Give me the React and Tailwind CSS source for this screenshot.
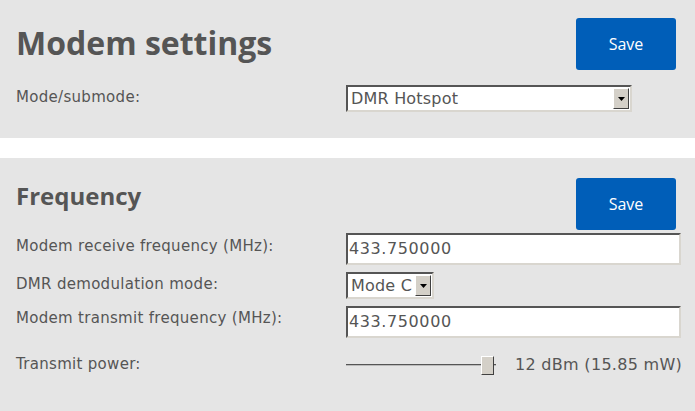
import { useState } from 'react';

const headFont = { fontFamily: '"Open Sans", "DejaVu Sans", sans-serif' };
const bodyFont = { fontFamily: '"DejaVu Sans", "Open Sans", sans-serif' };

function SaveButton() {
  return (
    <button
      className="w-[100px] h-[52px] rounded-[3px] bg-[#005eb8] text-white text-[16px] shrink-0"
      style={headFont}
    >
      Save
    </button>
  );
}

function FakeSelect({ value, width }) {
  return (
    <div
      className="flex items-stretch h-[27px] bg-white border-2 border-t-[#555] border-l-[#555] border-b-[#d9d6cf] border-r-[#d9d6cf]"
      style={{ width }}
    >
      <div className="flex-1 flex items-center pl-[3px] text-[16px] text-[#555] leading-none tracking-[0.2px] whitespace-nowrap overflow-hidden">
        {value}
      </div>
      <div className="w-[16px] shrink-0 my-[1px] mr-[1px] bg-[#d4d0c8] border border-t-white border-l-white border-b-[#404040] border-r-[#404040] flex items-center justify-center">
        <svg width="7" height="4" viewBox="0 0 7 4"><path d="M0 0h7L3.5 4z" fill="#000" /></svg>
      </div>
    </div>
  );
}

function TextBox({ value }) {
  return (
    <div className="w-[335px] h-[32px] bg-white border-2 border-t-[#555] border-l-[#555] border-b-[#d9d6cf] border-r-[#d9d6cf] flex items-center pl-[1px] text-[16px] text-[#555] tracking-[0.6px]">
      {value}
    </div>
  );
}

export default function App() {
  const [power] = useState(12);
  return (
    <div className="w-[695px] h-[411px] bg-white overflow-hidden" style={bodyFont}>
      <section className="bg-[#e5e5e5] h-[138px] pl-[16px] pr-[19px] pt-[18px]">
        <div className="flex items-center justify-between h-[52px]">
          <h1 className="text-[32px] font-bold text-[#555] leading-none -mt-[2px]" style={headFont}>
            Modem settings
          </h1>
          <SaveButton />
        </div>
        <div className="flex items-center mt-[15px]">
          <div className="w-[330px] text-[15px] text-[#555] -mt-[2px] tracking-[0.3px]">Mode/submode:</div>
          <FakeSelect value="DMR Hotspot" width={286} />
        </div>
      </section>

      <section className="bg-[#e5e5e5] h-[253px] mt-[20px] pl-[16px] pr-[14px] pt-[20px]">
        <div className="flex items-center justify-between h-[52px] pr-[5px]">
          <h2 className="text-[24px] font-bold text-[#555] leading-none -mt-[16px]" style={headFont}>
            Frequency
          </h2>
          <SaveButton />
        </div>
        <div className="grid grid-cols-[330px_335px] gap-y-[7px] mt-[3px] text-[15px] text-[#555] tracking-[0.3px]">
          <div className="pt-[2px]">Modem receive frequency (MHz):</div>
          <TextBox value="433.750000" />
          <div className="pt-[1px]">DMR demodulation mode:</div>
          <FakeSelect value="Mode C" width={88} />
          <div className="pt-[1px]">Modem transmit frequency (MHz):</div>
          <TextBox value="433.750000" />
          <div className="pt-[8px]">Transmit power:</div>
          <div className="flex items-center pt-[8px]">
            <div className="relative w-[150px] h-[20px] shrink-0">
              <div className="absolute left-0 right-0 top-[9px] h-[1px] bg-[#555]" />
              <div className="absolute left-0 right-0 top-[10px] h-[1px] bg-[#bbb]" />
              <div className="absolute left-[135px] top-[1px] w-[13px] h-[19px] bg-[#d4d0c8] border border-t-white border-l-white border-b-[#404040] border-r-[#404040]" />
            </div>
            <span className="ml-[19px] text-[16px] tracking-[0.3px] whitespace-nowrap">{power} dBm (15.85 mW)</span>
          </div>
        </div>
      </section>
    </div>
  );
}
